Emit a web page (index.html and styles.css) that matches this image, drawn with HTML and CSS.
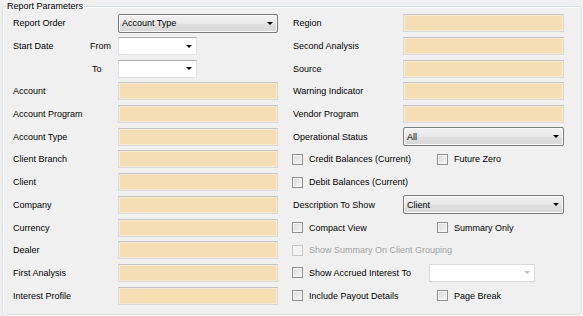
FILE: index.html
```html
<!DOCTYPE html>
<html>
<head>
<meta charset="utf-8">
<link rel="stylesheet" href="styles.css">
</head>
<body>
<fieldset class="group">
  <legend>Report Parameters</legend>
  <div class="form">
    <span class="l">Report Order</span>
    <div class="f combo list"><span>Account Type</span><i class="arr"></i></div>
    <span class="rl">Region</span>
    <div class="rf tb"></div>

    <span class="l">Start Date</span>
    <span class="sub">From</span>
    <div class="f combo edit short"><span></span><i class="arr"></i></div>
    <span class="rl">Second Analysis</span>
    <div class="rf tb"></div>

    <span class="sub to">To</span>
    <div class="f combo edit short"><span></span><i class="arr"></i></div>
    <span class="rl">Source</span>
    <div class="rf tb"></div>

    <span class="l">Account</span>
    <div class="f tb"></div>
    <span class="rl">Warning Indicator</span>
    <div class="rf tb"></div>

    <span class="l">Account Program</span>
    <div class="f tb"></div>
    <span class="rl">Vendor Program</span>
    <div class="rf tb"></div>

    <span class="l">Account Type</span>
    <div class="f tb"></div>
    <span class="rl">Operational Status</span>
    <div class="rf combo list"><span>All</span><i class="arr"></i></div>

    <span class="l">Client Branch</span>
    <div class="f tb"></div>
    <div class="rc">
      <label class="chk first"><i class="cb"></i>Credit Balances (Current)</label>
      <label class="chk"><i class="cb"></i>Future Zero</label>
    </div>

    <span class="l">Client</span>
    <div class="f tb"></div>
    <div class="rc">
      <label class="chk first"><i class="cb"></i>Debit Balances (Current)</label>
    </div>

    <span class="l">Company</span>
    <div class="f tb"></div>
    <span class="rl">Description To Show</span>
    <div class="rf combo list"><span>Client</span><i class="arr"></i></div>

    <span class="l">Currency</span>
    <div class="f tb"></div>
    <div class="rc">
      <label class="chk first"><i class="cb"></i>Compact View</label>
      <label class="chk"><i class="cb"></i>Summary Only</label>
    </div>

    <span class="l">Dealer</span>
    <div class="f tb"></div>
    <div class="rc">
      <label class="chk first dis"><i class="cb"></i>Show Summary On Client Grouping</label>
    </div>

    <span class="l">First Analysis</span>
    <div class="f tb"></div>
    <div class="rc">
      <label class="chk accr"><i class="cb"></i>Show Accrued Interest To</label>
      <div class="combo edit dis accbox"><span></span><i class="arr"></i></div>
    </div>

    <span class="l">Interest Profile</span>
    <div class="f tb"></div>
    <div class="rc">
      <label class="chk first"><i class="cb"></i>Include Payout Details</label>
      <label class="chk"><i class="cb"></i>Page Break</label>
    </div>
  </div>
</fieldset>
</body>
</html>
```
FILE: styles.css
```css
html, body {
  margin: 0;
  padding: 0;
}
body {
  width: 583px;
  height: 316px;
  overflow: hidden;
  background: #f0f0f0;
  font-family: "Liberation Sans", Arial, sans-serif;
  font-size: 9px;
  color: #000;
}
.group {
  margin: 0 1px 0 2px;
  padding: 0 10px 7px 10px;
  height: 315px;
  box-sizing: border-box;
  border: 1px solid #d5dfe5;
  border-radius: 3px;
  box-shadow: inset 1px 1px 0 #fff, 1px 1px 0 #fff;
  min-width: 0;
}
.group legend {
  padding: 0 1px;
  margin-left: -7px;
  line-height: 13px;
  font-size: 9px;
}
.form {
  margin-top: -1px;
  display: grid;
  grid-template-columns: 77px 28px 160px 14px 111px 161px;
  grid-auto-rows: 22.7px;
  align-items: center;
}
.l { grid-column: 1; white-space: nowrap; }
.sub { grid-column: 2; }
.sub.to { padding-left: 2px; }
.f { grid-column: 3; }
.rl { grid-column: 5; padding-left: 1px; white-space: nowrap; }
.rf { grid-column: 6; }
.rc {
  grid-column: 5 / 7;
  display: flex;
  align-items: center;
}

.tb {
  height: 18px;
  box-sizing: border-box;
  border: 1px solid #dadada;
  border-top-color: #c4c4c4;
  background: #f5deb3;
  box-shadow: inset 0 0 0 1px #f7ead2;
}

.combo {
  height: 18px;
  box-sizing: border-box;
  display: flex;
  align-items: center;
  justify-content: space-between;
  padding: 0 3px 0 3px;
}
.combo.list {
  height: 19px;
  border: 1px solid #7a7a7a;
  border-radius: 2px;
  background: linear-gradient(#f2f2f2, #e8e8e8 50%, #dedede 51%, #d8d8d8);
  box-shadow: inset 0 0 0 1px #f9f9f9;
}
.combo.edit {
  background: #fff;
  border: 1px solid #e2e3ea;
  border-top-color: #abadb3;
  border-left-color: #dbdfe6;
}
.combo.short { width: 79px; }
.arr {
  flex: none;
  width: 0;
  height: 0;
  border-left: 3px solid transparent;
  border-right: 3px solid transparent;
  border-top: 3px solid #000;
  margin-right: 1px;
}
.combo.dis {
  border-color: #d9d9d9;
}
.combo.dis .arr { border-top-color: #c4c4c4; }
.accbox { flex: none; width: 106px; }

.chk {
  flex: none;
  display: flex;
  align-items: center;
  white-space: nowrap;
}
.chk.first { width: 145px; }
.chk.accr { width: 137px; }
.cb {
  flex: none;
  width: 11px;
  height: 11px;
  box-sizing: border-box;
  margin-right: 6px;
  border: 1px solid #8f8f8f;
  background: linear-gradient(135deg, #d6d8db, #f8f8f8);
  box-shadow: inset 0 0 0 1px #f4f4f4;
}
.chk.dis { color: #a0a0a0; }
.chk.dis .cb {
  border-color: #c6c6c6;
  background: #f4f4f4;
  box-shadow: none;
}
```
